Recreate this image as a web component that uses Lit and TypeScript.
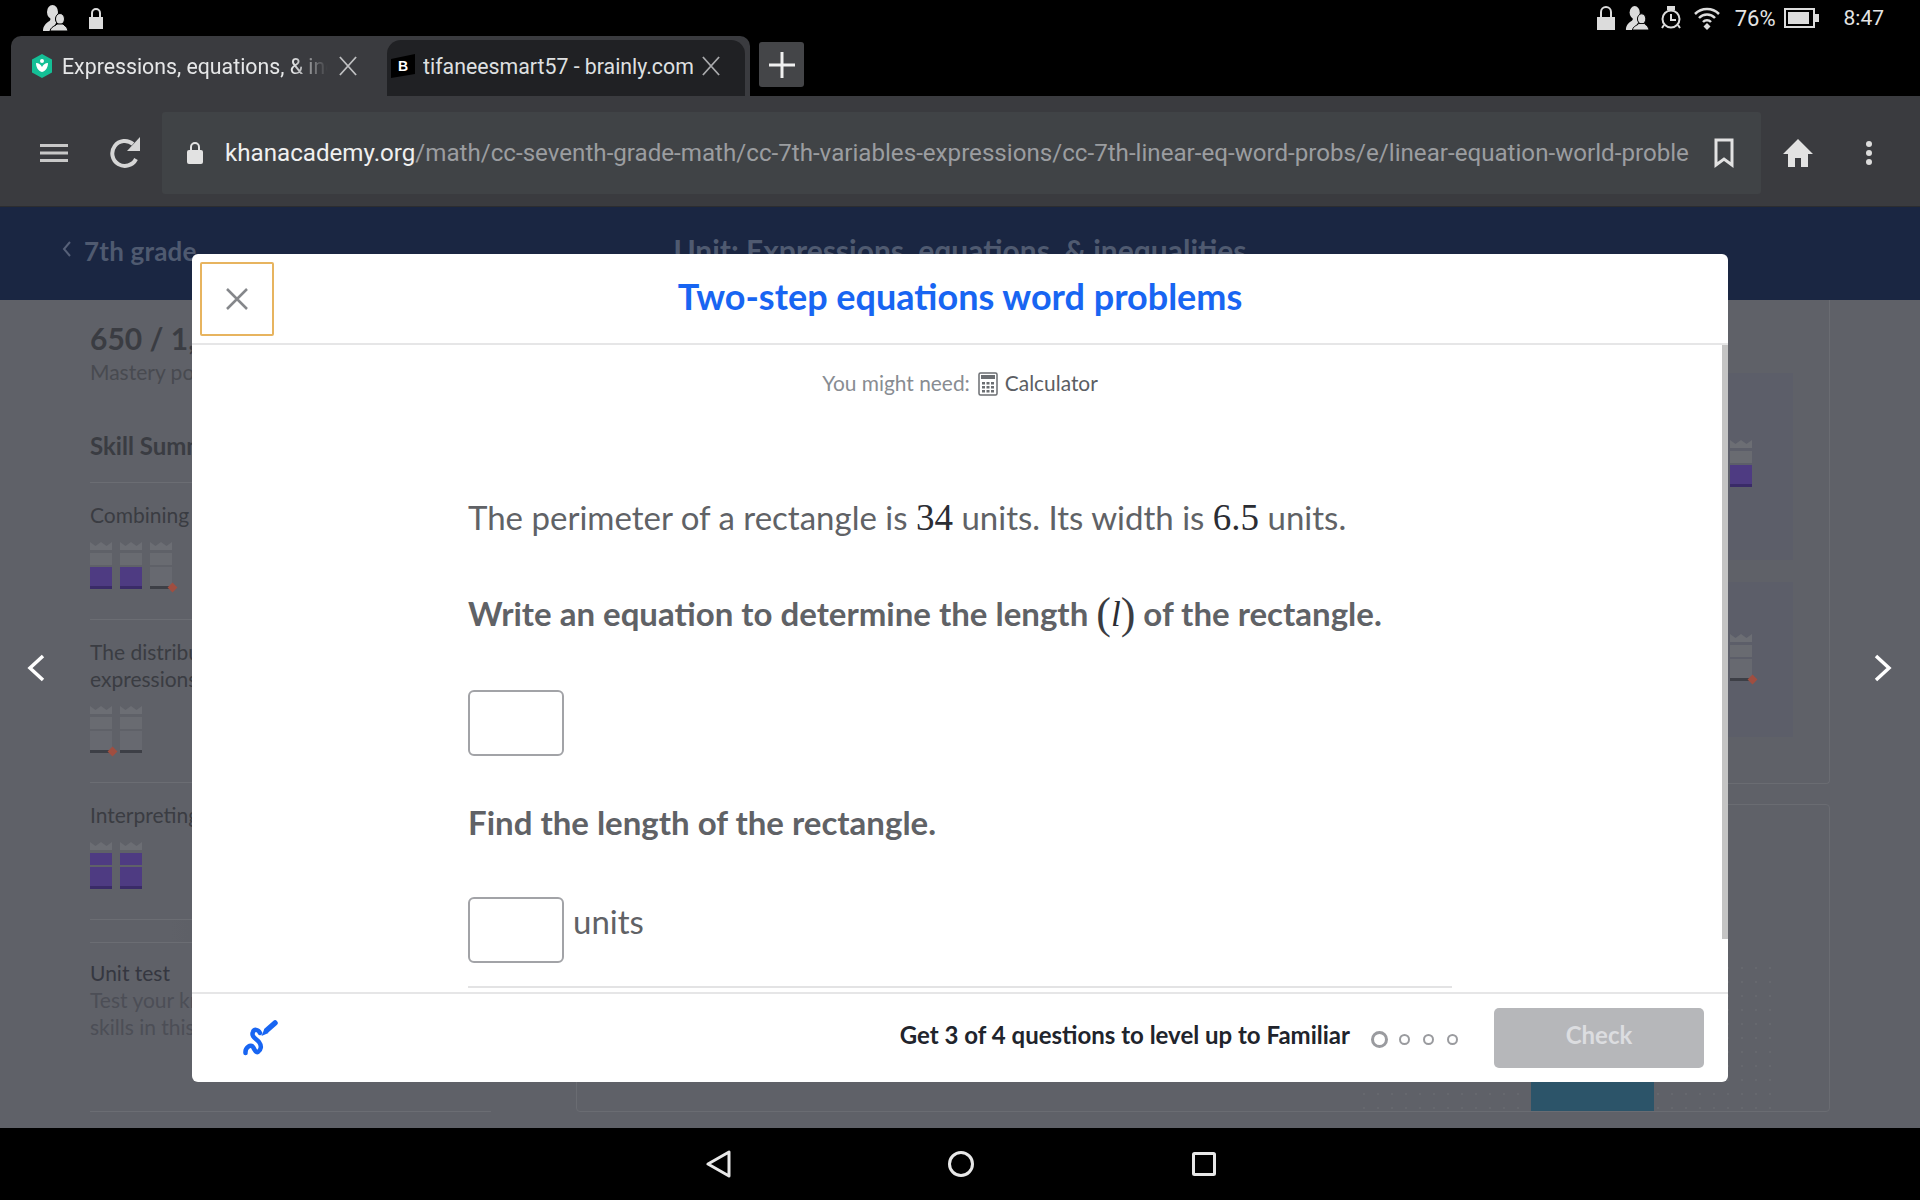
import { LitElement, html, css, svg } from "lit";
import { customElement } from "lit/decorators.js";

const person = svg`<ellipse cx="10.500" cy="7" rx="5.500" ry="7"/><path d="M1 26c0-5 3-8 6.500-10 1-1 1-2 1-3h4.500c0 2 .5 3 1.500 4L10 26z"/><ellipse cx="18" cy="14" rx="4.500" ry="5.500" stroke="#000" stroke-width="1"/><path d="M8 26c.5-3 3-4.500 6-6l1-1h6l1 1c2 1.500 3.500 3 4 6z" stroke="#000" stroke-width="1"/>`;

const tower = (lower: string, upper = "grey", mark = "") => html`
  <div class="tower">
    <svg class="crown" viewBox="0 0 22 8" width="22" height="8"><path d="M0 0l5.500 4L11 0l5.500 4L22 0v8H0z" fill="#6c6e74"/></svg>
    <div class="tw-top ${upper}"></div>
    <div class="tw-low ${lower}"></div>
    ${mark ? html`<span class="diamond"></span>` : ""}
  </div>`;

@customElement("app-root")
export class AppRoot extends LitElement {
  static styles = css`
    :host { display: block; width: 1920px; height: 1200px; overflow: hidden; font-family: Lato, sans-serif; }
    * { box-sizing: border-box; }
    .screen { display: flex; flex-direction: column; height: 1200px; background: #000; }

    .status { height: 36px; display: flex; align-items: center; padding: 0 36px 0 42px; color: #e4e4e4; font: 21px Roboto, sans-serif; }
    .status svg { fill: #dcdcdc; display: block; }
    .status .grow { flex: 1; }
    .s-lock { margin-left: 20px; }
    .st-r { display: flex; align-items: center; }
    .pct { margin-left: 14px; font-size: 22px; }

    .tabs { height: 60px; display: flex; padding-left: 11px; font: 21.300px Roboto, sans-serif; }
    .strip { width: 739px; height: 60px; background: #3a3b3f; border-radius: 10px 10px 0 0; display: flex; }
    .tab { display: flex; align-items: center; height: 60px; }
    .tab.one { width: 376px; padding: 0 0 0 20px; color: #e6e7e8; }
    .tab.two { width: 358px; height: 56px; margin-top: 4px; background: #202124; border-radius: 14px 14px 0 0; padding: 0 0 4px 4px; color: #dfe0e1; }
    .tab .label { white-space: nowrap; overflow: hidden; margin-left: 9px; }
    .tab.one .label { width: 274px; -webkit-mask-image: linear-gradient(90deg, #000 84%, transparent 97%); mask-image: linear-gradient(90deg, #000 84%, transparent 97%); }
    .tab.two .label { margin-left: 8px; width: 270px; }
    .tab .x { margin-left: 3px; flex: none; }
    .tab.two .x { margin-left: 9px; }
    .plus { width: 45px; height: 45px; margin: 6px 0 0 9px; background: #444548; border-radius: 3px; display: flex; align-items: center; justify-content: center; }

    .toolbar { height: 111px; background: #3a3b3f; display: flex; align-items: center; padding: 3px 0 0 40px; border-bottom: 1px solid #2c2d30; }
    .reload { margin-left: 42px; }
    .url { margin-left: 20px; width: 1599px; height: 82px; background: #404346; border-radius: 3px; display: flex; align-items: center; padding-left: 25px; font: 24.150px Roboto, sans-serif; color: #9b9da0; white-space: nowrap; }
    .url b { font-weight: 400; color: #f0f0f0; }
    .url .addr { width: 1465px; overflow: hidden; margin-left: 22px; }
    .url .mark { margin-left: 24px; }
    .home { margin-left: 22px; }
    .dots { margin-left: 53px; }

    .page { flex: 1; position: relative; background: #5f6168; overflow: hidden; }
    .band { height: 93px; background: #1a2642; display: flex; align-items: flex-start; padding: 28px 0 0 62px; color: #4f5a70; font-weight: 700; position: relative; }
    .band .back { font-size: 26px; display: flex; align-items: center; gap: 12px; letter-spacing: .2px; }
    .band .back svg { margin-top: -5px; }
    .band .unit { position: absolute; left: 0; right: 0; top: 25px; text-align: center; font-size: 30px; }
    .cols { display: flex; height: 828px; }
    .side { width: 401px; margin-left: 90px; color: #3a3c42; font-size: 21px; line-height: 27px; }
    .side .pts { font-size: 30px; font-weight: 700; margin-top: 20px; line-height: 36px; white-space: nowrap; }
    .side .sub { color: #484a50; line-height: 24px; white-space: nowrap; margin-top: 4px; }
    .side .skill { font-size: 24px; font-weight: 700; margin-top: 47px; line-height: 30px; padding-bottom: 21px; border-bottom: 1px solid #6b6d73; }
    .row { border-bottom: 1px solid #6b6d73; padding-top: 18px; }
    .towers { display: flex; gap: 8px; margin-top: 14px; }
    .tower { width: 22px; position: relative; align-self: flex-start; flex: none; }
    .crown { display: block; }
    .tw-top { height: 12px; margin-top: 3px; background: #696b71; }
    .tw-low { height: 22px; margin-top: 2px; }
    .tw-low.purple { background: #4e3b82; border-bottom: 3px solid #3a2b68; }
    .tw-top.purple { background: #4e3b82; }
    .tw-low.grey { background: #676970; border-bottom: 3px solid #3d3f46; }
    .diamond { position: absolute; right: -4px; bottom: -2px; width: 7px; height: 7px; background: #a04e40; transform: rotate(45deg); }
    .r1 { height: 137px; }
    .r2 { height: 163px; }
    .r3 { height: 137px; }
    .shade { height: 23px; border-bottom: 1px solid #6b6d73; background: linear-gradient(90deg, transparent 20%, #55565b 70%); }
    .unit-row { height: 169px; padding-top: 16px; border-bottom: 1px solid #6b6d73; color: #3a3c42; }
    .unit-row div { color: #4c4e56; }
    .unit-row div.t { color: #353740; }
    .main { width: 1254px; margin-left: 85px; display: flex; flex-direction: column; }
    .panel { border: 1px solid #6a6c72; border-top: 0; height: 484px; padding: 73px 36px 0 0; display: flex; flex-direction: column; align-items: flex-end; gap: 22px; border-radius: 0 0 4px 4px; }
    .card { width: 800px; background: #5c5e69; display: flex; justify-content: flex-end; padding-right: 41px; }
    .card.a { height: 187px; padding-top: 67px; }
    .card.b { height: 155px; padding-top: 52px; }
    .panel2 { border: 1px solid #6a6c72; margin-top: 20px; height: 308px; display: flex; align-items: flex-end; padding: 0 0 0 954px; position: relative; border-radius: 4px; }
    .dotsfield { position: absolute; right: 48px; bottom: 0; width: 424px; height: 150px; background-image: radial-gradient(circle, #66686e 1.2px, transparent 1.500px); background-size: 14px 14px; }
    .blue { width: 123px; height: 60px; background: #2c5469; position: relative; }

    .side-arrow { position: absolute; top: 446px; }
    .side-arrow.l { left: 26px; }
    .side-arrow.r { left: 1873px; }

    .modal { position: absolute; left: 192px; top: 47px; width: 1536px; height: 828px; background: #fff; border-radius: 6px; display: flex; flex-direction: column; overflow: hidden; }
    .m-head { height: 91px; flex: none; display: flex; align-items: center; justify-content: center; border-bottom: 2px solid #e6e6e7; position: relative; }
    .m-head h1 { margin: 0; font-size: 36px; font-weight: 700; color: #1865f2; line-height: 1; margin-top: -6px; }
    .close { position: absolute; left: 8px; top: 8px; width: 74px; height: 74px; border: 2px solid #e7b45f; border-radius: 2px; display: flex; align-items: center; justify-content: center; background: #fff; padding: 0; }
    .m-body { flex: 1; position: relative; overflow: hidden; }
    .need { height: 80px; padding-top: 24px; display: flex; justify-content: center; align-items: flex-start; font-size: 20.900px; line-height: 28px; color: #888c92; }
    .need svg { margin: 3px 7px 0 8px; }
    .need span.c { color: #5b5e63; }
    .content { margin: 0 0 0 276px; width: 984px; color: #606266; font-size: 33px; }
    .p1 { margin-top: 72px; line-height: 40px; white-space: nowrap; }
    .p2 { margin-top: 55px; line-height: 40px; font-weight: 700; white-space: nowrap; }
    .p3 { margin-top: 46px; line-height: 40px; font-weight: 700; }
    .math { font-family: "Liberation Serif", serif; font-size: 37px; color: #2b2d33; font-weight: 400; }
    .paren { font-size: 44px; font-weight: 400; font-family: "Liberation Serif", serif; color: #3a3c42; vertical-align: -2px; }
    .math i { font-size: 35px; }
    .input { width: 96px; height: 66px; border: 2px solid #a2a3a7; border-radius: 6px; background: #fff; }
    .i1 { margin-top: 55px; }
    .i2row { margin-top: 55px; display: flex; align-items: flex-start; gap: 9px; padding-bottom: 23px; border-bottom: 2px solid #e3e3e4; }
    .i2row span { line-height: 48px; }
    .scroll { position: absolute; right: 0; top: 0; width: 6px; height: 594px; background: #c4c4c4; }
    .m-foot { height: 90px; flex: none; border-top: 2px solid #e6e6e7; display: flex; align-items: center; padding: 0 24px 0 50px; }
    .m-foot .msg { margin-left: auto; font-size: 24px; font-weight: 700; color: #21242c; margin-top: -8px; }
    .prog { display: flex; align-items: center; margin: 3px 0 0 21px; }
    .prog span { display: block; width: 11px; height: 11px; border: 2.500px solid #9a9b9f; border-radius: 50%; margin-left: 13px; }
    .prog span:first-child { width: 17px; height: 17px; margin-left: 0; border-width: 3px; }
    .prog span:nth-child(2) { margin-left: 11px; }
    .check { margin-left: 36px; width: 210px; height: 60px; background: #b6b7ba; border-radius: 5px; color: #dcdde0; font-size: 24px; font-weight: 700; display: flex; align-items: center; justify-content: center; padding-bottom: 8px; }

    .nav { height: 72px; display: flex; align-items: center; background: #000; padding-left: 706px; }
    .nav svg { display: block; }
    .nav .n2 { margin-left: 216px; }
    .nav .n3 { margin-left: 218px; }
  `;

  render() {
    return html`
    <div class="screen">
      <div class="status">
        <svg viewBox="0 0 26 26" width="26" height="26">${person}</svg>
        <svg class="s-lock" viewBox="0 0 16 22" width="16" height="22"><path d="M1 10h14v12H1z"/><path d="M4 10V6a4 4 0 0 1 8 0v4" fill="none" stroke="#dcdcdc" stroke-width="2"/></svg>
        <div class="grow"></div>
        <div class="st-r">
          <svg viewBox="0 0 18 24" width="18" height="24"><path d="M0 11h18v13H0z"/><path d="M4 11V6a5 5 0 0 1 10 0v5" fill="none" stroke="#dcdcdc" stroke-width="2"/></svg>
          <svg style="margin-left:10px" viewBox="0 0 26 26" width="24" height="24">${person}</svg>
          <svg style="margin-left:10px" viewBox="0 0 24 24" width="24" height="24"><circle cx="12" cy="13" r="8.500" fill="none" stroke="#dcdcdc" stroke-width="2"/><path d="M12 8v6h5M9 1h6v2H9zM3 22l2-3M21 22l-2-3" fill="none" stroke="#dcdcdc" stroke-width="2"/></svg>
          <svg style="margin-left:10px" viewBox="0 0 28 24" width="28" height="24"><path d="M2 8a17 17 0 0 1 24 0M6 12a11 11 0 0 1 16 0M10 16a5.500 5.500 0 0 1 8 0" fill="none" stroke="#dcdcdc" stroke-width="2.500"/><path d="M14 17l3.500 3.500L14 24l-3.500-3.500z"/></svg>
          <span class="pct">76%</span>
          <svg style="margin-left:8px" viewBox="0 0 35 20" width="35" height="20"><rect x="1" y="1" width="29" height="18" fill="none" stroke="#dcdcdc" stroke-width="2"/><rect x="4" y="4" width="21" height="12"/><rect x="31" y="6" width="4" height="8"/></svg>
          <span style="margin-left:25px">8:47</span>
        </div>
      </div>

      <div class="tabs">
        <div class="strip">
          <div class="tab one">
            <svg viewBox="0 0 22 24" width="22" height="24"><path d="M11 0l10 5.500v13L11 24 1 18.500v-13z" fill="#14bf96"/><path d="M5 9c3 0 5 2 6 4 1-2 3-4 6-4 0 4-2 8-6 9-4-1-6-5-6-9z" fill="#fff"/><circle cx="11" cy="7" r="2" fill="#fff"/></svg>
            <span class="label">Expressions, equations, &amp; inequalities</span>
            <svg class="x" viewBox="0 0 20 22" width="18" height="22"><path d="M1 1l18 20M19 1L1 21" stroke="#bfc0c2" stroke-width="2" fill="none"/></svg>
          </div>
          <div class="tab two">
            <svg viewBox="0 0 24 24" width="24" height="24"><path d="M0 5l24-5v20L0 24z" fill="#000"/><text x="12" y="17" font-family="Liberation Sans, sans-serif" font-weight="700" font-size="14" fill="#fff" text-anchor="middle">B</text></svg>
            <span class="label">tifaneesmart57 - brainly.com</span>
            <svg class="x" viewBox="0 0 20 22" width="18" height="22"><path d="M1 1l18 20M19 1L1 21" stroke="#a9aaac" stroke-width="2" fill="none"/></svg>
          </div>
        </div>
        <div class="plus"><svg viewBox="0 0 26 26" width="26" height="26"><path d="M13 0v26M0 13h26" stroke="#f0f0f0" stroke-width="3" fill="none"/></svg></div>
      </div>

      <div class="toolbar">
        <svg viewBox="0 0 28 18" width="28" height="18"><path d="M0 1.500h28M0 9h28M0 16.500h28" stroke="#c8c8c8" stroke-width="3" fill="none"/></svg>
        <svg class="reload" viewBox="0 0 32 32" width="32" height="32"><path d="M26 22a12.500 12.500 0 1 1-3-15" fill="none" stroke="#d6d6d6" stroke-width="4"/><path d="M30 0v14H17z" fill="#d6d6d6"/></svg>
        <div class="url">
          <svg viewBox="0 0 16 22" width="16" height="22"><rect y="8" width="16" height="14" rx="2" fill="#e2e2e2"/><path d="M4 9V5a4 4 0 0 1 8 0v4" fill="none" stroke="#e2e2e2" stroke-width="2"/></svg>
          <div class="addr"><b>khanacademy.org</b>/math/cc-seventh-grade-math/cc-7th-variables-expressions/cc-7th-linear-eq-word-probs/e/linear-equation-world-proble</div>
          <svg class="mark" viewBox="0 0 20 30" width="20" height="30"><path d="M2 2h16v25l-8-6-8 6z" fill="none" stroke="#e2e2e2" stroke-width="3"/></svg>
        </div>
        <svg class="home" viewBox="0 0 30 28" width="30" height="28"><path d="M15 0l15 15h-5v13h-7v-9h-6v9H5V15H0z" fill="#e2e2e2"/></svg>
        <svg class="dots" viewBox="0 0 6 24" width="6" height="24"><circle cx="3" cy="3" r="3" fill="#dcdcdc"/><circle cx="3" cy="12" r="3" fill="#dcdcdc"/><circle cx="3" cy="21" r="3" fill="#dcdcdc"/></svg>
      </div>

      <div class="page">
        <div class="band">
          <div class="back"><svg viewBox="0 0 10 16" width="10" height="16"><path d="M8 1L2 8l6 7" fill="none" stroke="#566078" stroke-width="2"/></svg>7th grade</div>
          <div class="unit">Unit: Expressions, equations, &amp; inequalities</div>
        </div>
        <div class="cols">
          <div class="side">
            <div class="pts">650 / 1,500</div>
            <div class="sub">Mastery points</div>
            <div class="skill">Skill Summary</div>
            <div class="row r1">Combining like terms
              <div class="towers">${tower("purple")}${tower("purple")}${tower("grey", "grey", "y")}</div>
            </div>
            <div class="row r2">The distributive property &amp; equivalent<br />expressions
              <div class="towers">${tower("grey", "grey", "y")}${tower("grey")}</div>
            </div>
            <div class="row r3">Interpreting linear expressions
              <div class="towers">${tower("purple", "purple")}${tower("purple", "purple")}</div>
            </div>
            <div class="shade"></div>
            <div class="unit-row">
              <div class="t">Unit test</div>
              <div>Test your knowledge of all the<br />skills in this unit.</div>
            </div>
          </div>
          <div class="main">
            <div class="panel">
              <div class="card a">${tower("purple")}</div>
              <div class="card b">${tower("grey", "grey", "y")}</div>
            </div>
            <div class="panel2">
              <div class="dotsfield"></div>
              <div class="blue"></div>
            </div>
          </div>
        </div>

        <svg class="side-arrow l" viewBox="0 0 20 30" width="20" height="30"><path d="M17 3L4 15l13 12" fill="none" stroke="#fff" stroke-width="3.500"/></svg>
        <svg class="side-arrow r" viewBox="0 0 20 30" width="20" height="30"><path d="M3 3l13 12L3 27" fill="none" stroke="#fff" stroke-width="3.500"/></svg>

        <div class="modal">
          <div class="m-head">
            <button class="close"><svg viewBox="0 0 22 22" width="22" height="22"><path d="M1 1l20 20M21 1L1 21" stroke="#85878b" stroke-width="2.500" fill="none"/></svg></button>
            <h1>Two-step equations word problems</h1>
          </div>
          <div class="m-body">
            <div class="need">You might need:
              <svg viewBox="0 0 20 24" width="20" height="24"><rect x="1" y="1" width="18" height="22" rx="1.500" fill="none" stroke="#6b6e72" stroke-width="1.500"/><rect x="3" y="3" width="14" height="4" fill="#6b6e72"/><path d="M4 10h3v2.500H4zM8.500 10h3v2.500h-3zM13 10h3v2.500h-3zM4 14h3v2.500H4zM8.500 14h3v2.500h-3zM13 14h3v2.500h-3zM4 18h3v2.500H4zM8.500 18h3v2.500h-3zM13 18h3v2.500h-3z" fill="#6b6e72"/></svg>
              <span class="c">Calculator</span></div>
            <div class="content">
              <div class="p1">The perimeter of a rectangle is <span class="math">34</span> units. Its width is <span class="math">6.5</span> units.</div>
              <div class="p2">Write an equation to determine the length <span class="paren">(</span><span class="math"><i>l</i></span><span class="paren">)</span> of the rectangle.</div>
              <div class="input i1"></div>
              <div class="p3">Find the length of the rectangle.</div>
              <div class="i2row"><div class="input"></div><span>units</span></div>
            </div>
            <div class="scroll"></div>
          </div>
          <div class="m-foot">
            <svg viewBox="0 0 36 37" width="36" height="37"><path d="M3.500 33C3 27 9 24 11 27c2 3 2.500 6 5 5 3-2 4-6 1-10-4-4-8-6-6-10 1-3 5-3 7 1" fill="none" stroke="#1865f2" stroke-width="4.500" stroke-linecap="round" stroke-linejoin="round"/><path d="M33 3L25 10" stroke="#1865f2" stroke-width="5.500" stroke-linecap="round"/><path d="M22.500 8.500l4 4.500-7 3z" fill="#1865f2"/></svg>
            <div class="msg">Get 3 of 4 questions to level up to Familiar</div>
            <div class="prog"><span></span><span></span><span></span><span></span></div>
            <div class="check">Check</div>
          </div>
        </div>
      </div>

      <div class="nav">
        <svg viewBox="0 0 26 28" width="26" height="28"><path d="M23 2v24L2 14z" fill="none" stroke="#e8e8e8" stroke-width="3" stroke-linejoin="round"/></svg>
        <svg class="n2" viewBox="0 0 26 26" width="26" height="26"><circle cx="13" cy="13" r="11.500" fill="none" stroke="#e8e8e8" stroke-width="3"/></svg>
        <svg class="n3" viewBox="0 0 24 24" width="24" height="24"><rect x="1.500" y="1.500" width="21" height="21" rx="1" fill="none" stroke="#e8e8e8" stroke-width="3"/></svg>
      </div>
    </div>`;
  }
}
